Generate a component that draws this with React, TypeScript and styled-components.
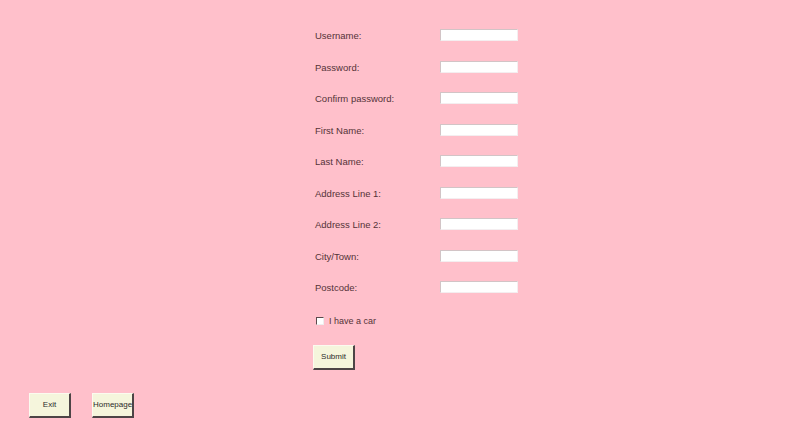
import React, { useState } from 'react';
import styled, { createGlobalStyle } from 'styled-components';

const GlobalStyle = createGlobalStyle`
  html, body {
    margin: 0;
    padding: 0;
    background: #ffc0cb;
  }
  body {
    font-family: 'Liberation Sans', Arial, sans-serif;
  }
`;

const Page = styled.div`
  width: 806px;
  height: 446px;
  background: #ffc0cb;
  display: flex;
  flex-direction: column;
  overflow: hidden;
`;

const Form = styled.form`
  display: grid;
  grid-template-columns: 125px 78px;
  grid-auto-rows: 31.5px;
  align-items: center;
  padding: 20px 0 0 315px;
`;

const Label = styled.label`
  font-size: 9.5px;
  color: #553338;
  line-height: 1;
`;

const Field = styled.input`
  box-sizing: border-box;
  width: 78px;
  height: 12px;
  margin: 0 0 1px 0;
  padding: 0 2px;
  background: #ffffff;
  border: none;
  border-top: 1px solid #d2c4c6;
  border-left: 1px solid #d2c4c6;
  border-right: 1px solid #f4eef0;
  border-bottom: 1px solid #f4eef0;
  font-size: 9px;
  outline: none;
`;

const CheckRow = styled.label`
  grid-column: 1 / span 2;
  display: flex;
  align-items: center;
  gap: 5px;
  font-size: 9px;
  color: #553338;
  padding: 4px 0 0 1px;
  cursor: pointer;
`;

const Box = styled.span<{ $on: boolean }>`
  box-sizing: border-box;
  width: 8px;
  height: 8px;
  background: #ffffff;
  border-top: 1px solid #5a4a4c;
  border-left: 1px solid #5a4a4c;
  border-right: 1px solid #eee;
  border-bottom: 1px solid #eee;
  display: flex;
  align-items: center;
  justify-content: center;
  font-size: 7px;
  line-height: 1;
  color: #222;

  &::after {
    content: ${p => (p.$on ? "'✓'" : "''")};
  }
`;

const HiddenCheck = styled.input`
  display: none;
`;

const TkButton = styled.button<{ $w: number }>`
  box-sizing: border-box;
  width: ${p => p.$w}px;
  height: 25px;
  padding: 0 0 1px 0;
  background: #f5f5dc;
  border-top: 1px solid #fbfbef;
  border-left: 1px solid #fbfbef;
  border-right: 2px solid #4d4446;
  border-bottom: 2px solid #4d4446;
  font-family: 'Liberation Sans', Arial, sans-serif;
  font-size: 8px;
  color: #2b2b2b;
  cursor: pointer;
  white-space: nowrap;
`;

const SubmitWrap = styled.div`
  padding: 10px 0 0 313px;
`;

const Footer = styled.div`
  display: flex;
  gap: 21px;
  padding: 23px 0 0 29px;
`;

const fields = [
  { label: 'Username:', type: 'text' },
  { label: 'Password:', type: 'password' },
  { label: 'Confirm password:', type: 'password' },
  { label: 'First Name:', type: 'text' },
  { label: 'Last Name:', type: 'text' },
  { label: 'Address Line 1:', type: 'text' },
  { label: 'Address Line 2:', type: 'text' },
  { label: 'City/Town:', type: 'text' },
  { label: 'Postcode:', type: 'text' },
];

const App: React.FC = () => {
  const [hasCar, setHasCar] = useState(false);

  return (
    <Page>
      <GlobalStyle />
      <Form onSubmit={e => e.preventDefault()}>
        {fields.map(f => (
          <React.Fragment key={f.label}>
            <Label>{f.label}</Label>
            <Field type={f.type} />
          </React.Fragment>
        ))}
        <CheckRow>
          <HiddenCheck
            type="checkbox"
            checked={hasCar}
            onChange={e => setHasCar(e.target.checked)}
          />
          <Box $on={hasCar} />
          I have a car
        </CheckRow>
      </Form>
      <SubmitWrap>
        <TkButton $w={42}>Submit</TkButton>
      </SubmitWrap>
      <Footer>
        <TkButton $w={42}>Exit</TkButton>
        <TkButton $w={42}>Homepage</TkButton>
      </Footer>
    </Page>
  );
};

export default App;
